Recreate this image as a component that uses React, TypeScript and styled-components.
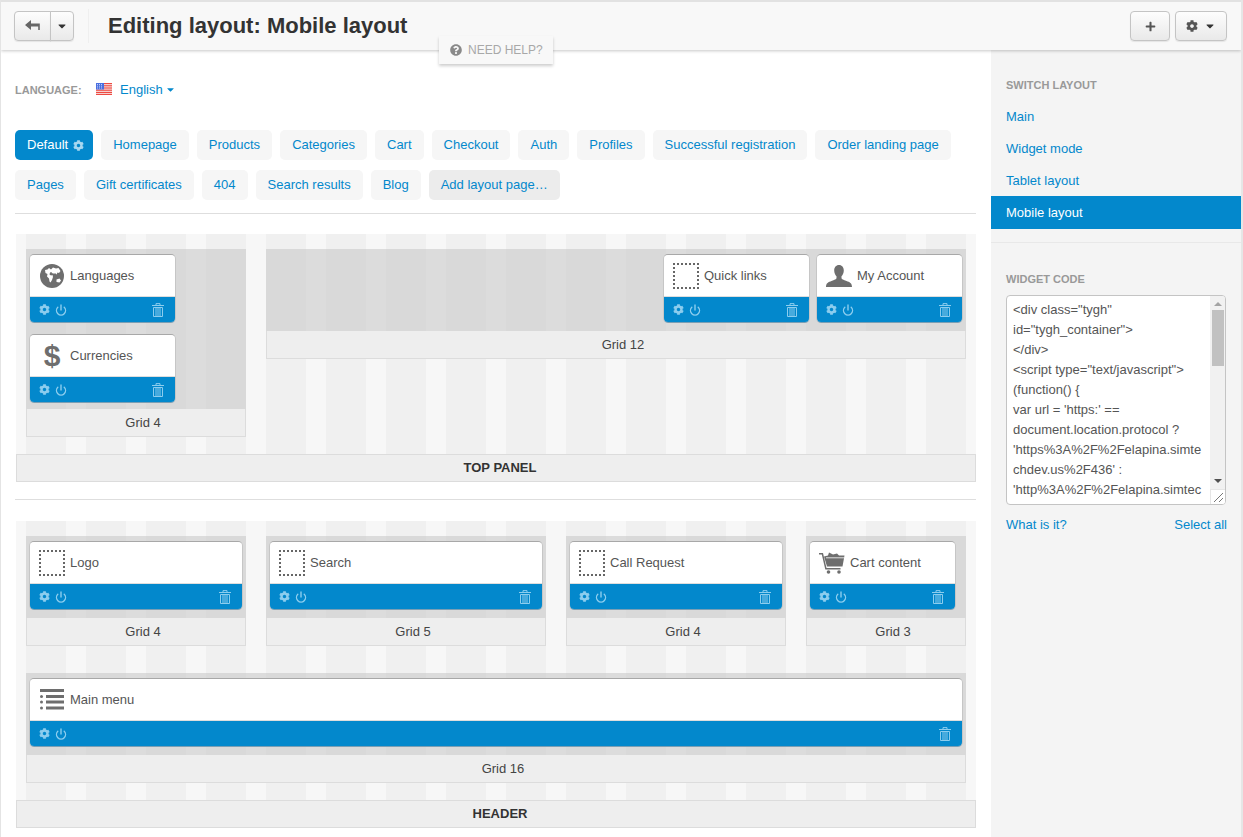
import React from "react";
import styled, { createGlobalStyle } from "styled-components";
import { FaCog, FaPlus, FaQuestionCircle, FaCaretDown } from "react-icons/fa";
import { Power } from "lucide-react";

const BLUE = "#0388cc";

const GlobalStyle = createGlobalStyle`
  html, body {
    margin: 0;
    padding: 0;
    background: #fff;
    overflow: hidden;
  }
  * { box-sizing: border-box; }
`;

const Page = styled.div`
  position: relative;
  width: 1243px;
  height: 837px;
  overflow: hidden;
  font-family: "Liberation Sans", Arial, sans-serif;
  font-size: 13px;
  color: #555;
  border-left: 1px solid #e4e4e4;
  border-right: 2px solid #e6e6e6;
`;

const Header = styled.header`
  position: relative;
  z-index: 2;
  height: 50px;
  padding: 0 14px 0 13px;
  display: flex;
  align-items: center;
  background: #f8f8f8;
  border-top: 2px solid #e2e2e2;
  box-shadow: 0 1px 3px rgba(0, 0, 0, 0.22);
`;

const BtnGroup = styled.div`
  display: flex;
`;

const ToolButton = styled.div<{ $w: number; $joined?: "left" | "right" }>`
  width: ${(p) => p.$w}px;
  height: 30px;
  display: flex;
  align-items: center;
  justify-content: center;
  gap: 6px;
  color: #555;
  background: linear-gradient(#fdfdfd, #e9e9e9);
  border: 1px solid #c4c4c4;
  border-radius: ${(p) => (p.$joined === "left" ? "4px 0 0 4px" : p.$joined === "right" ? "0 4px 4px 0" : "4px")};
  margin-left: ${(p) => (p.$joined === "right" ? "-1px" : "0")};
  box-shadow: 0 1px 1px rgba(0, 0, 0, 0.08);
`;

const HeaderDivider = styled.div`
  width: 1px;
  height: 34px;
  margin: 0 19px 0 14px;
  background: #efefef;
`;

const Title = styled.h1`
  flex: 1;
  margin: 0;
  font-size: 22px;
  font-weight: 700;
  color: #333;
`;

const HeaderActions = styled.div`
  display: flex;
  gap: 5px;
`;

const HelpTab = styled.div`
  position: absolute;
  z-index: 3;
  left: 438px;
  top: 36px;
  width: 114px;
  height: 28px;
  display: flex;
  align-items: center;
  gap: 6px;
  padding-left: 11px;
  font-size: 12px;
  color: #a8a8a8;
  background: #f8f8f8;
  box-shadow: 0 2px 3px rgba(0, 0, 0, 0.2);
  svg { color: #8a8a8a; }
`;

const Body = styled.div`
  display: flex;
  height: 787px;
`;

const Main = styled.main`
  width: 990px;
  padding: 29px 15px 0 14px;
  background: #fff;
`;

const LangRow = styled.div`
  height: 20px;
  display: flex;
  align-items: center;
`;

const LangLabel = styled.span`
  width: 81px;
  padding-top: 1px;
  font-size: 11px;
  font-weight: 700;
  color: #999;
`;

const LangLink = styled.span`
  display: flex;
  align-items: center;
  margin-left: 8px;
  color: ${BLUE};
  svg { margin-left: 2px; }
`;

const Tabs = styled.nav`
  display: flex;
  flex-wrap: wrap;
  gap: 10px 8px;
  margin-top: 31px;
`;

const Tab = styled.span<{ $active?: boolean; $add?: boolean }>`
  height: 30px;
  display: flex;
  align-items: center;
  gap: 5px;
  padding: 0 ${(p) => (p.$active ? 9 : 12)}px 2px 12px;
  border-radius: 5px;
  color: ${(p) => (p.$active ? "#fff" : BLUE)};
  background: ${(p) => (p.$active ? BLUE : p.$add ? "#ececec" : "#f6f6f6")};
  svg { color: #a8d8f0; margin-top: 2px; }
`;

const Rule = styled.hr`
  margin: 0;
  border: 0;
  height: 1px;
  background: #dedede;
`;

const TabsRule = styled(Rule)`
  margin: 13px 0 20px;
`;

const SectionRule = styled(Rule)`
  margin: 17px 0 21px;
`;

const Section = styled.section`
  margin-left: 1px;
  width: 960px;
`;

const Canvas = styled.div`
  padding: 15px 10px 17px;
  display: flex;
  flex-direction: column;
  gap: 27px;
  background: repeating-linear-gradient(90deg, #f7f7f7 0 10px, #f0f0f0 10px 50px, #f7f7f7 50px 60px);
`;

const Row = styled.div`
  display: flex;
  gap: 20px;
  align-items: flex-start;
`;

const SectionBar = styled.div`
  height: 28px;
  padding: 0 0 2px 8px;
  display: flex;
  align-items: center;
  justify-content: center;
  font-weight: 700;
  color: #333;
  background: #eee;
  border: 1px solid #dcdcdc;
`;

const GridBox = styled.div<{ $span: number }>`
  width: ${(p) => p.$span * 60 - 20}px;
`;

const GridBody = styled.div<{ $alignEnd?: boolean }>`
  min-height: 82px;
  display: flex;
  flex-wrap: wrap;
  align-content: flex-start;
  justify-content: ${(p) => (p.$alignEnd ? "flex-end" : "flex-start")};
  gap: 11px 6px;
  padding: 5px 3px 6px;
  background: repeating-linear-gradient(90deg, #d9d9d9 0 40px, #dcdcdc 40px 60px);
`;

const GridLabel = styled.div`
  height: 28px;
  padding-left: 14px;
  display: flex;
  align-items: center;
  justify-content: center;
  color: #444;
  background: #eee;
  border: 1px solid #dcdcdc;
  border-top: 0;
`;

const Block = styled.div<{ $w: number | "full" }>`
  width: ${(p) => (p.$w === "full" ? "100%" : `${p.$w}px`)};
  height: 69px;
  display: flex;
  flex-direction: column;
  border-radius: 5px;
  overflow: hidden;
  border: 1px solid #c6c6c6;
  border-top-color: #a8a8a8;
  border-bottom-color: #7a9fb5;
`;

const BlockHead = styled.div`
  height: 42px;
  flex: none;
  display: flex;
  align-items: center;
  background: #fff;
  border-bottom: 1px solid #dedede;
  color: #555;
`;

const BlockIcon = styled.span`
  width: 40px;
  flex: none;
  padding-left: 4px;
  display: flex;
  align-items: center;
  justify-content: center;
  color: #6e6e6e;
`;

const Dotted = styled.span`
  width: 26px;
  height: 26px;
  border: 2px dotted #666;
`;

const DollarGlyph = styled.span`
  font-size: 30px;
  font-weight: 700;
  line-height: 30px;
  color: #6e6e6e;
`;

const BlockBar = styled.div`
  flex: 1;
  display: flex;
  align-items: center;
  gap: 5px;
  padding: 0 11px 0 9px;
  background: ${BLUE};
  color: #8ccdee;
`;

const Spacer = styled.span`
  flex: 1;
`;

const Sidebar = styled.aside`
  flex: 1;
  padding-top: 29px;
  background: #f4f4f4;
`;

const SideTitle = styled.div`
  padding-left: 15px;
  font-size: 11px;
  font-weight: 700;
  color: #999;
  line-height: 13px;
`;

const SideNav = styled.div`
  margin-top: 8px;
`;

const SideLink = styled.div<{ $active?: boolean }>`
  height: ${(p) => (p.$active ? 33 : 32)}px;
  padding-left: 15px;
  display: flex;
  align-items: center;
  color: ${(p) => (p.$active ? "#fff" : BLUE)};
  background: ${(p) => (p.$active ? BLUE : "transparent")};
`;

const SideRule = styled.div`
  height: 1px;
  margin: 13px 0 30px;
  background: #e8e8e8;
`;

const CodeBox = styled.div`
  position: relative;
  width: 220px;
  height: 210px;
  margin: 9px 0 0 15px;
  display: flex;
  background: #fff;
  border: 1px solid #c4c4c4;
  border-radius: 4px;
  overflow: hidden;
`;

const CodeText = styled.div`
  flex: 1;
  padding: 4px 0 0 6px;
  line-height: 20px;
  color: #555;
  white-space: pre;
`;

const Scrollbar = styled.div`
  width: 15px;
  display: flex;
  flex-direction: column;
  align-items: center;
  background: #f1f1f1;
`;

const ScrollThumb = styled.div`
  width: 12px;
  height: 56px;
  margin-top: 4px;
  background: #c1c1c1;
`;

const ScrollArrow = styled.div<{ $down?: boolean }>`
  width: 0;
  height: 0;
  margin-top: ${(p) => (p.$down ? "113px" : "6px")};
  border-left: 4px solid transparent;
  border-right: 4px solid transparent;
  ${(p) => (p.$down ? "border-top: 4px solid #505050;" : "border-bottom: 4px solid #a3a3a3;")}
`;

const Grip = styled.div`
  position: absolute;
  right: 0;
  bottom: 0;
  width: 15px;
  height: 15px;
  display: flex;
  background: #fff;
  border: 1px solid #e6e6e6;
  border-width: 1px 0 0 1px;
`;

const CodeLinks = styled.div`
  width: 221px;
  margin: 12px 0 0 15px;
  display: flex;
  justify-content: space-between;
  color: ${BLUE};
`;

const Flag = () => (
  <svg width="16" height="12" viewBox="0 0 16 12">
    <rect width="16" height="12" fill="#f8f0f0" />
    {[0, 2.2, 4.4, 6.6, 8.8, 10.8].map((y) => (
      <rect key={y} y={y} width="16" height="1.2" fill="#ee4a42" />
    ))}
    <rect width="8" height="6.5" fill="#4a6fe0" />
    <path d="M1 1.5h6M1 3.2h6M1 5h6" stroke="#dfe6fa" strokeWidth="0.8" strokeDasharray="1 1" />
  </svg>
);

const BackIcon = () => (
  <svg width="15" height="12" viewBox="0 0 15 12" fill="#666">
    <path d="M0 5L6 0v3.400h8.800V10h-1.600V6.400H6V10z" />
  </svg>
);

const Trash = () => (
  <svg width="12" height="14" viewBox="0 0 12 14" fill="none" stroke="currentColor">
    <path d="M0 2.500h12" strokeWidth="1.200" />
    <path d="M4 2V.6h4V2" strokeWidth="1" />
    <path d="M1.500 4.500h9v9h-9zM4 4.500v9M6 4.500v9M8 4.500v9" strokeWidth="1" />
  </svg>
);

const GlobeIcon = () => (
  <svg width="24" height="24" viewBox="0 0 24 24">
    <circle cx="12" cy="12" r="12" fill="currentColor" />
    <path
      d="M5 6l2.500-.5L9 4l2 1.500 2-2 3 1 2.500-.5 2 3-1.500 2-1.500-.5-1 2-1.500-1.500-1 1-1-1-1 .5-.5-1.500-1.500.5-.5 2 1.500 1 1.500-.5.5 2-1 3-1.500 2.500-1-1-.5-3-2-2 .5-2.500L5.500 9z"
      fill="#fff"
    />
    <path d="M16.500 15.500l3-1 1.500 2-1.500 2-3-.5z" fill="#fff" />
  </svg>
);

const UserIcon = () => (
  <svg width="26" height="22" viewBox="0 0 26 22" fill="currentColor">
    <path d="M13 0c3 0 4.800 2.400 4.800 5.500 0 2.300-1 4.500-2.300 5.800v1.700c0 1.300 2.200 2 5 3 3 1 5.500 2 5.500 6H0c0-4 2.500-5 5.500-6 2.800-1 5-1.700 5-3v-1.700C9.200 10 8.200 7.800 8.200 5.500 8.200 2.400 10 0 13 0z" />
  </svg>
);

const CartIcon = () => (
  <svg width="26" height="23" viewBox="0 0 26 23" fill="currentColor">
    <path d="M0 2h4l3.500 15h14v1.500H6.300L2.800 3.500H0z" />
    <path d="M5 5.500l4-1 1-3 4 2 4-1 2 2h5.500L23.500 15.500H8z" />
    <path d="M7 6.800h18.500" stroke="#fff" strokeWidth="0.8" />
    <circle cx="9.500" cy="21" r="1.800" />
    <circle cx="20" cy="21" r="1.800" />
  </svg>
);

const MenuIcon = () => (
  <svg width="24" height="22" viewBox="0 0 24 22" fill="currentColor">
    <rect width="24" height="3" />
    <circle cx="1.500" cy="7.500" r="1.500" />
    <rect x="6" y="6" width="18" height="3" />
    <circle cx="1.500" cy="13" r="1.500" />
    <rect x="6" y="11.500" width="18" height="3" />
    <circle cx="1.500" cy="19" r="1.500" />
    <rect x="6" y="17.500" width="18" height="3" />
  </svg>
);

type BlockData = { name: string; icon: React.ReactNode; w: number | "full" };

const dotted = <Dotted />;

const WidgetBlock = ({ name, icon, w }: BlockData) => (
  <Block $w={w}>
    <BlockHead>
      <BlockIcon>{icon}</BlockIcon>
      {name}
    </BlockHead>
    <BlockBar>
      <FaCog size={11} />
      <Power size={12} strokeWidth={2.8} />
      <Spacer />
      <Trash />
    </BlockBar>
  </Block>
);

const Grid = ({ span, blocks, alignEnd }: { span: number; blocks: BlockData[]; alignEnd?: boolean }) => (
  <GridBox $span={span}>
    <GridBody $alignEnd={alignEnd}>
      {blocks.map((b) => (
        <WidgetBlock key={b.name} {...b} />
      ))}
    </GridBody>
    <GridLabel>Grid {span}</GridLabel>
  </GridBox>
);

const row1 = ["Homepage", "Products", "Categories", "Cart", "Checkout", "Auth", "Profiles", "Successful registration", "Order landing page"];
const row2 = ["Pages", "Gift certificates", "404", "Search results", "Blog"];

const codeLines = [
  '<div class="tygh"',
  'id="tygh_container">',
  "</div>",
  '<script type="text/javascript">',
  "(function() {",
  "var url = 'https:' ==",
  "document.location.protocol ?",
  "'https%3A%2F%2Felapina.simte",
  "chdev.us%2F436' :",
  "'http%3A%2F%2Felapina.simtec",
];

export default function App() {
  return (
    <Page>
      <GlobalStyle />
      <Header>
        <BtnGroup>
          <ToolButton $w={37} $joined="left">
            <BackIcon />
          </ToolButton>
          <ToolButton $w={24} $joined="right">
            <FaCaretDown size={12} color="#333" />
          </ToolButton>
        </BtnGroup>
        <HeaderDivider />
        <Title>Editing layout: Mobile layout</Title>
        <HeaderActions>
          <ToolButton $w={40}>
            <FaPlus size={11} />
          </ToolButton>
          <ToolButton $w={52}>
            <FaCog size={12} />
            <FaCaretDown size={12} color="#333" />
          </ToolButton>
        </HeaderActions>
      </Header>
      <HelpTab>
        <FaQuestionCircle size={12} />
        NEED HELP?
      </HelpTab>
      <Body>
        <Main>
          <LangRow>
            <LangLabel>LANGUAGE:</LangLabel>
            <Flag />
            <LangLink>
              English
              <FaCaretDown size={11} />
            </LangLink>
          </LangRow>
          <Tabs>
            <Tab $active>
              Default <FaCog size={11} />
            </Tab>
            {row1.map((t) => (
              <Tab key={t}>{t}</Tab>
            ))}
            {row2.map((t) => (
              <Tab key={t}>{t}</Tab>
            ))}
            <Tab $add>Add layout page…</Tab>
          </Tabs>
          <TabsRule />
          <Section>
            <Canvas>
              <Row>
                <Grid
                  span={4}
                  blocks={[
                    { name: "Languages", icon: <GlobeIcon />, w: 147 },
                    { name: "Currencies", icon: <DollarGlyph>$</DollarGlyph>, w: 147 },
                  ]}
                />
                <Grid
                  span={12}
                  alignEnd
                  blocks={[
                    { name: "Quick links", icon: dotted, w: 147 },
                    { name: "My Account", icon: <UserIcon />, w: 147 },
                  ]}
                />
              </Row>
            </Canvas>
            <SectionBar>TOP PANEL</SectionBar>
          </Section>
          <SectionRule />
          <Section>
            <Canvas>
              <Row>
                <Grid span={4} blocks={[{ name: "Logo", icon: dotted, w: "full" }]} />
                <Grid span={5} blocks={[{ name: "Search", icon: dotted, w: "full" }]} />
                <Grid span={4} blocks={[{ name: "Call Request", icon: dotted, w: "full" }]} />
                <Grid span={3} blocks={[{ name: "Cart content", icon: <CartIcon />, w: 147 }]} />
              </Row>
              <Row>
                <Grid span={16} blocks={[{ name: "Main menu", icon: <MenuIcon />, w: "full" }]} />
              </Row>
            </Canvas>
            <SectionBar>HEADER</SectionBar>
          </Section>
        </Main>
        <Sidebar>
          <SideTitle>SWITCH LAYOUT</SideTitle>
          <SideNav>
            <SideLink>Main</SideLink>
            <SideLink>Widget mode</SideLink>
            <SideLink>Tablet layout</SideLink>
            <SideLink $active>Mobile layout</SideLink>
          </SideNav>
          <SideRule />
          <SideTitle>WIDGET CODE</SideTitle>
          <CodeBox>
            <CodeText>{codeLines.join("\n")}</CodeText>
            <Scrollbar>
              <ScrollArrow />
              <ScrollThumb />
              <ScrollArrow $down />
            </Scrollbar>
            <Grip>
              <svg width="14" height="14" viewBox="0 0 14 14" stroke="#777" strokeWidth="1">
                <path d="M3 12L12 3M8 12L12 8" />
              </svg>
            </Grip>
          </CodeBox>
          <CodeLinks>
            <span>What is it?</span>
            <span>Select all</span>
          </CodeLinks>
        </Sidebar>
      </Body>
    </Page>
  );
}
